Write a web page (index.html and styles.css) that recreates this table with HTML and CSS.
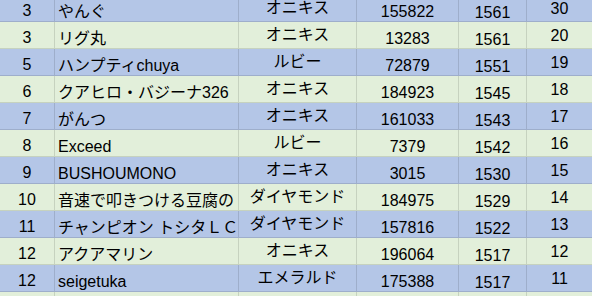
FILE: index.html
```html
<!DOCTYPE html>
<html lang="ja">
<head>
<meta charset="utf-8">
<title>ランキング</title>
<link rel="stylesheet" href="styles.css">
</head>
<body>
<div class="sheet">
  <div class="row blue"><div class="c rank">3</div><div class="c name">やんぐ</div><div class="c tier">オニキス</div><div class="c pts">155822</div><div class="c rate">1561</div><div class="c num">30</div></div>
  <div class="row green"><div class="c rank">3</div><div class="c name">リグ丸</div><div class="c tier">オニキス</div><div class="c pts">13283</div><div class="c rate">1561</div><div class="c num">20</div></div>
  <div class="row blue"><div class="c rank">5</div><div class="c name">ハンプティchuya</div><div class="c tier">ルビー</div><div class="c pts">72879</div><div class="c rate">1551</div><div class="c num">19</div></div>
  <div class="row green"><div class="c rank">6</div><div class="c name">クアヒロ・バジーナ326</div><div class="c tier">オニキス</div><div class="c pts">184923</div><div class="c rate">1545</div><div class="c num">18</div></div>
  <div class="row blue"><div class="c rank">7</div><div class="c name">がんつ</div><div class="c tier">オニキス</div><div class="c pts">161033</div><div class="c rate">1543</div><div class="c num">17</div></div>
  <div class="row green"><div class="c rank">8</div><div class="c name">Exceed</div><div class="c tier">ルビー</div><div class="c pts">7379</div><div class="c rate">1542</div><div class="c num">16</div></div>
  <div class="row blue"><div class="c rank">9</div><div class="c name">BUSHOUMONO</div><div class="c tier">オニキス</div><div class="c pts">3015</div><div class="c rate">1530</div><div class="c num">15</div></div>
  <div class="row green"><div class="c rank">10</div><div class="c name">音速で叩きつける豆腐の</div><div class="c tier">ダイヤモンド</div><div class="c pts">184975</div><div class="c rate">1529</div><div class="c num">14</div></div>
  <div class="row blue"><div class="c rank">11</div><div class="c name">チャンピオン トシタＬＣ</div><div class="c tier">ダイヤモンド</div><div class="c pts">157816</div><div class="c rate">1522</div><div class="c num">13</div></div>
  <div class="row green"><div class="c rank">12</div><div class="c name">アクアマリン</div><div class="c tier">オニキス</div><div class="c pts">196064</div><div class="c rate">1517</div><div class="c num">12</div></div>
  <div class="row blue"><div class="c rank">12</div><div class="c name">seigetuka</div><div class="c tier">エメラルド</div><div class="c pts">175388</div><div class="c rate">1517</div><div class="c num">11</div></div>
  <div class="row green"><div class="c rank"></div><div class="c name"></div><div class="c tier"></div><div class="c pts"></div><div class="c rate"></div><div class="c num"></div></div>
</div>
</body>
</html>
```
FILE: styles.css
```css
html, body {
  margin: 0;
  padding: 0;
  overflow: hidden;
  background: #ffffff;
}

body {
  font-family: "Liberation Sans", "Noto Sans CJK JP", sans-serif;
  font-size: 16px;
  color: #000000;
}

.sheet {
  display: flex;
  flex-direction: column;
  margin-top: -5px;
}

.row {
  display: grid;
  grid-template-columns: 55px 184px 118px 102px 68px 1fr;
  height: 27px;
  box-sizing: border-box;
  border-bottom: 1px solid rgba(0, 0, 0, 0.12);
}

.blue { background: #b4c6e7; }
.green { background: #e2efda; }

.c {
  display: flex;
  align-items: flex-end;
  justify-content: center;
  line-height: 16px;
  white-space: nowrap;
  overflow: hidden;
  border-right: 1px solid rgba(0, 0, 0, 0.12);
  box-sizing: border-box;
}

.rank { padding-bottom: 2px; }
.name { justify-content: flex-start; padding-left: 3px; padding-bottom: 1px; }
.tier { padding-bottom: 5px; }
.pts { padding-bottom: 1px; }
.rate { padding-bottom: 0; }
.num { padding-bottom: 4px; border-right: none; }
```
